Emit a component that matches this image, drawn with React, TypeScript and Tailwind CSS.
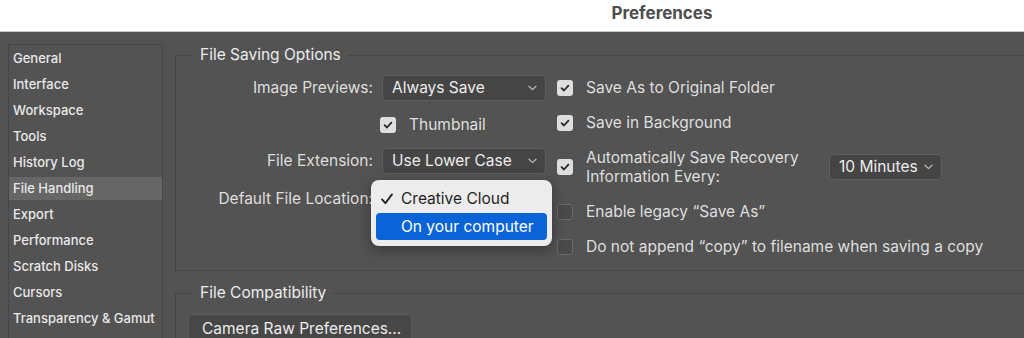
import React from 'react';

const SIDEBAR = [
  'General',
  'Interface',
  'Workspace',
  'Tools',
  'History Log',
  'File Handling',
  'Export',
  'Performance',
  'Scratch Disks',
  'Cursors',
  'Transparency & Gamut',
];

function Check({ checked }: { checked: boolean }) {
  if (!checked) {
    return <span className="block h-[16px] w-[16px] shrink-0 rounded-[3px] border border-[#6b6b6b] bg-[#4a4a4a]" />;
  }
  return (
    <span className="flex h-[16px] w-[16px] shrink-0 items-center justify-center rounded-[3px] bg-[#dedede]">
      <svg width="10" height="10" viewBox="0 0 10 10" fill="none">
        <path d="M1.6 5.2 L4 7.5 L8.4 2.6" stroke="#2a2a2a" strokeWidth="1.8" strokeLinecap="round" strokeLinejoin="round" />
      </svg>
    </span>
  );
}

function Select({ value, className }: { value: string; className: string }) {
  return (
    <div
      className={`flex h-[26px] items-center justify-between rounded-[4px] border border-[#5f5f5f] bg-[#454545] pl-[9px] pr-[8px] text-[#ececec] ${className}`}
    >
      <span>{value}</span>
      <svg width="9" height="6" viewBox="0 0 9 6" fill="none">
        <path d="M1 1.2 L4.5 4.6 L8 1.2" stroke="#bdbdbd" strokeWidth="1.2" strokeLinecap="round" strokeLinejoin="round" />
      </svg>
    </div>
  );
}

function CheckRow({ checked, label, className = '' }: { checked: boolean; label: string; className?: string }) {
  return (
    <div className={`flex h-[26px] items-center gap-[13px] ${className}`}>
      <Check checked={checked} />
      <span>{label}</span>
    </div>
  );
}

export default function App() {
  return (
    <div
      className="h-[338px] w-[1024px] overflow-hidden bg-[#535353] text-[15.5px]"
      style={{ fontFamily: 'Inter, "Liberation Sans", sans-serif' }}
    >
      <header className="flex h-[32px] w-[1324px] justify-center border-b border-[#c4c4c4] bg-white pt-[3px]">
        <span className="text-[17px] font-bold leading-[20px] text-[#4d4d4d]">Preferences</span>
      </header>

      <div className="flex">
        {/* sidebar */}
        <nav className="ml-[8px] mt-[12px] flex h-[400px] w-[155px] shrink-0 flex-col gap-[3px] border border-[#474747] pt-[2px] text-[13px] font-medium text-[#e8e8e8]">
          {SIDEBAR.map((s) => (
            <div
              key={s}
              className={`h-[23px] pl-[4px] leading-[23px] ${s === 'File Handling' ? 'bg-[#666666]' : ''}`}
            >
              {s}
            </div>
          ))}
        </nav>

        <main className="ml-[12px] mt-[13px] w-[900px] shrink-0 text-[#dedede]">
          <fieldset className="border border-[#464646] pb-[10px]">
            <legend className="ml-[17px] px-[7px] text-[#ececec] leading-[20px]">File Saving Options</legend>
            <div className="flex items-start pt-[10px]">
              {/* left column */}
              <div className="grid w-[370px] grid-cols-[197px_164px] content-start gap-x-[9px]">
                <span className="flex h-[26px] items-center justify-end">Image Previews:</span>
                <Select value="Always Save" className="w-[164px]" />

                <span className="mt-[11px]" />
                <CheckRow checked label="Thumbnail" className="-ml-[2px] mt-[11px]" />

                <span className="mt-[10px] flex h-[26px] items-center justify-end">File Extension:</span>
                <Select value="Use Lower Case" className="mt-[10px] w-[164px]" />

                <span className="mt-[12px] flex h-[26px] items-center justify-end whitespace-nowrap">Default File Location:</span>
                <div className="relative mt-[12px] h-[26px]">
                  {/* open menu of the location popup button */}
                  <div className="absolute left-[-11px] top-[-6px] w-[181px] rounded-[8px] bg-[#ececec] px-[5px] py-[6px] text-[#1f1f1f] shadow-[0_4px_14px_rgba(0,0,0,0.35)]">
                    <div className="flex h-[26px] items-center pl-[5px]">
                      <svg width="20" height="12" viewBox="0 0 20 12" fill="none" className="shrink-0">
                        <path d="M1 6.4 L4.4 10.2 L11 1.4" stroke="#1f1f1f" strokeWidth="1.8" strokeLinecap="round" strokeLinejoin="round" />
                      </svg>
                      <span>Creative Cloud</span>
                    </div>
                    <div className="mt-[1px] flex h-[27px] items-center rounded-[4px] bg-[#0b63d8] pl-[25px] text-white">
                      On your computer
                    </div>
                  </div>
                </div>
              </div>

              {/* right column */}
              <div className="ml-[11px] flex flex-col">
                <CheckRow checked label="Save As to Original Folder" />
                <CheckRow checked label="Save in Background" className="mt-[9px]" />
                <div className="mt-[12px] flex items-center">
                  <Check checked />
                  <span className="ml-[13px] w-[243px] leading-[19px]">
                    Automatically Save Recovery
                    <br />
                    Information Every:
                  </span>
                  <Select value="10 Minutes" className="w-[113px]" />
                </div>
                <CheckRow checked={false} label="Enable legacy “Save As”" className="mt-[13px]" />
                <CheckRow
                  checked={false}
                  label="Do not append “copy” to filename when saving a copy"
                  className="mt-[9px]"
                />
              </div>
            </div>
          </fieldset>

          <fieldset className="mt-[12px] h-[80px] border border-[#464646]">
            <legend className="ml-[17px] px-[7px] text-[#ececec] leading-[20px]">File Compatibility</legend>
            <div className="pl-[12px] pt-[11px]">
              <button className="h-[30px] w-[224px] rounded-[4px] border border-[#5f5f5f] bg-[#474747] pl-[13px] text-left text-[#ececec]">
                Camera Raw Preferences...
              </button>
            </div>
          </fieldset>
        </main>
      </div>
    </div>
  );
}
